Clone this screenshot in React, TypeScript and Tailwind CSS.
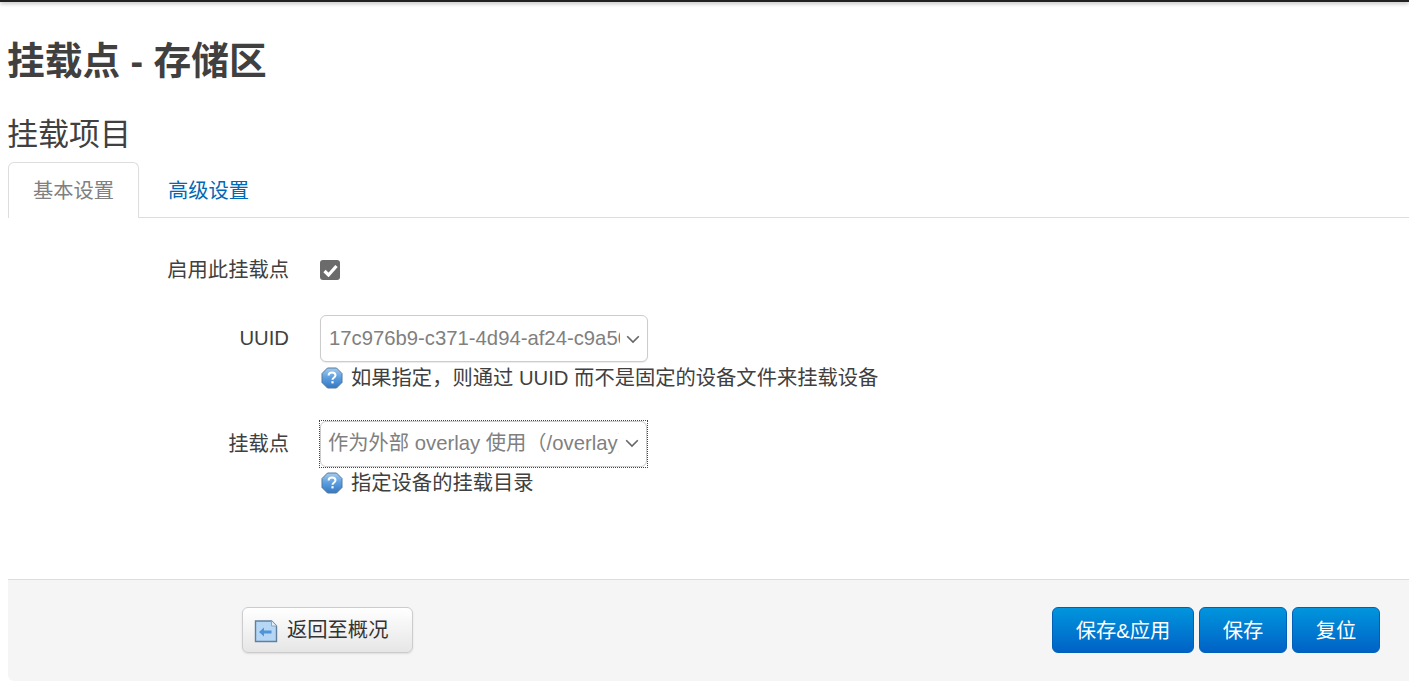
function HelpIcon() {
  return (
    <svg width="22" height="22" viewBox="0 0 22 22" className="shrink-0">
      <defs>
        <linearGradient id="helpFill" x1="0" y1="0" x2="0" y2="1">
          <stop offset="0" stopColor="#a4cbef" />
          <stop offset="0.5" stopColor="#5a9ddf" />
          <stop offset="1" stopColor="#3578c0" />
        </linearGradient>
      </defs>
      <path d="M6.5 1h9l5.5 5.5v9L15.5 21h-9L1 15.5v-9z" fill="url(#helpFill)" stroke="#54799c" strokeWidth="1" strokeLinejoin="round" />
      <path d="M7.6 8.6c0-2 1.5-3.1 3.5-3.1s3.4 1 3.4 2.8c0 2.4-3 2.4-3 4.4" fill="none" stroke="#fff" strokeWidth="2" />
      <rect x="10.4" y="14.2" width="2.2" height="2.2" fill="#fff" />
    </svg>
  )
}

function BackIcon() {
  return (
    <svg width="24" height="24" viewBox="0 0 24 24" className="shrink-0">
      <path d="M1.5 2h16l5 5v15.5h-21z" fill="#b5d6f5" stroke="#5f7f9e" strokeWidth="1.4" />
      <path d="M17.5 2v5h5" fill="#e4f0fb" stroke="#8aa6c0" strokeWidth="1" />
      <path d="M5 13l5-4.4v2.9h7.5v3H10v2.9z" fill="#4f94d6" />
    </svg>
  )
}

function Chevron({ className }: { className: string }) {
  return (
    <svg width="14" height="9" viewBox="0 0 14 9" className={`absolute right-[8px] pointer-events-none ${className}`}>
      <path d="M1.2 1.2L7 7l5.8-5.8" fill="none" stroke="#666" strokeWidth="1.6" />
    </svg>
  )
}

const font = 'font-["Liberation_Sans","Noto_Sans_CJK_SC",sans-serif]'
const primaryBtn = 'h-[46px] pt-[2px] rounded-[6px] border border-[#0060b8] bg-gradient-to-b from-[#0395dd] to-[#0062c6] text-[20.3px] text-white'

export default function App() {
  return (
    <div className={`${font} w-[1409px] h-[690px] overflow-hidden bg-white text-[#404040] text-[20.3px]`}>
      {/* Top bar edge */}
      <div className="h-[2px] bg-[#222] shadow-[0_1px_4px_rgba(0,0,0,0.45)]" />

      <div className="pl-2">
        <h2 className="pt-[37px] h-[87px] -ml-[1px] text-[37.7px] leading-[44px] font-bold text-[#404040]">挂载点 - 存储区</h2>
        <h3 className="pt-[24px] h-[73px] -ml-[1px] text-[31px] leading-[44px] text-[#404040]">挂载项目</h3>

        {/* Tabs */}
        <div className="flex h-[56px] border-b border-[#ddd]">
          <div className="w-[131px] h-[56px] pt-[2px] flex items-center justify-center bg-white border border-b-0 border-[#ddd] rounded-t-[6px] text-[#808080]">
            基本设置
          </div>
          <div className="ml-[29px] pt-[3px] flex items-center text-[#0069b4]">高级设置</div>
        </div>

        {/* Form */}
        <div className="pt-[41px] h-[361px]">
          <div className="flex items-center h-[22px]">
            <label className="w-[281px] text-right">启用此挂载点</label>
            <div className="ml-[31px] w-[20px] h-[20px] rounded-[3px] bg-[#6b6b6b] flex items-center justify-center">
              <svg width="15" height="13" viewBox="0 0 15 13">
                <path d="M1.5 7L5.5 11 13.5 2" fill="none" stroke="#fff" strokeWidth="3.2" />
              </svg>
            </div>
          </div>

          <div className="flex mt-[34px]">
            <label className="w-[281px] text-right leading-[47px]">UUID</label>
            <div className="ml-[31px]">
              <div className="relative w-[328px] h-[47px]">
                <select className="w-full h-full pl-[8px] pr-[27px] appearance-none bg-white border border-[#ccc] rounded-[6px] shadow-[0_1px_1px_rgba(0,0,0,0.08)] text-[#808080] outline-none">
                  <option>17c976b9-c371-4d94-af24-c9a50d1e2f3a</option>
                </select>
                <Chevron className="top-[20px]" />
              </div>
              <div className="flex items-center gap-[8px] h-[26px] mt-[3px] ml-[1px]">
                <HelpIcon />
                <span>{'如果指定\uFF0C则通过 UUID 而不是固定的设备文件来挂载设备'}</span>
              </div>
            </div>
          </div>

          <div className="flex mt-[30px]">
            <label className="w-[281px] text-right leading-[47px]">挂载点</label>
            <div className="ml-[31px]">
              <div className="relative w-[327px] h-[46px] outline-1 outline-dotted outline-[#444]">
                <select className="w-full h-full pl-[7px] pr-[27px] pb-[2px] appearance-none bg-white border border-[#ccc] rounded-[6px] text-[#808080] outline-none">
                  <option>{'作为外部 overlay 使用\uFF08/overlay\uFF09'}</option>
                </select>
                <Chevron className="top-[18px]" />
              </div>
              <div className="flex items-center gap-[8px] h-[26px] mt-[3px] ml-[1px]">
                <HelpIcon />
                <span>指定设备的挂载目录</span>
              </div>
            </div>
          </div>
        </div>

        {/* Footer actions */}
        <div className="h-[102px] bg-[#f5f5f5] border-t border-[#ddd] rounded-bl-[6px] pt-[27px] flex items-start">
          <button className="ml-[234px] w-[171px] h-[46px] pt-[1px] flex items-center pl-[11px] gap-[9px] rounded-[6px] border border-[#ccc] bg-gradient-to-b from-white to-[#e6e6e6] shadow-[0_1px_2px_rgba(0,0,0,0.1)] text-[#333]">
            <BackIcon />
            返回至概况
          </button>
          <div className="ml-auto mr-[29px] flex gap-[5px]">
            <button className={`${primaryBtn} w-[142px]`}>保存&amp;应用</button>
            <button className={`${primaryBtn} w-[88px]`}>保存</button>
            <button className={`${primaryBtn} w-[88px]`}>复位</button>
          </div>
        </div>
      </div>
    </div>
  )
}
